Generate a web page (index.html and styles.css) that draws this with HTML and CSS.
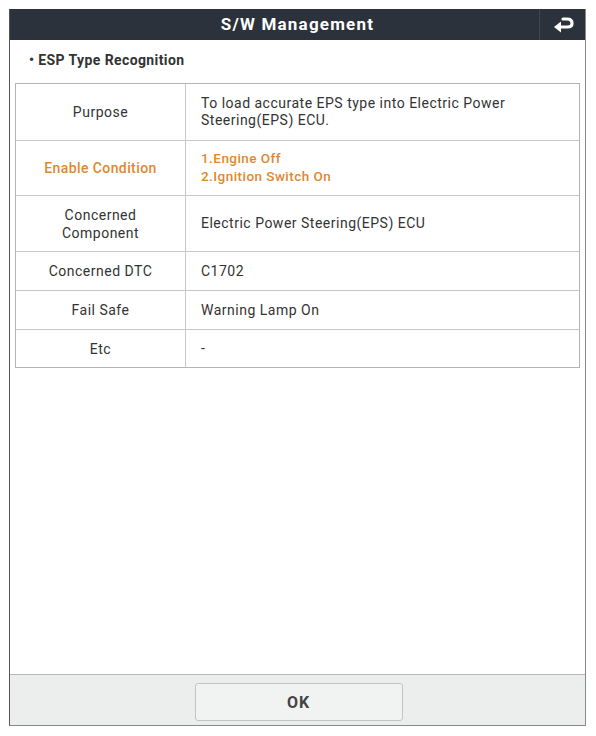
FILE: index.html
```html
<!DOCTYPE html>
<html>
<head>
<meta charset="utf-8">
<link rel="stylesheet" href="styles.css">
</head>
<body>
<div class="frame">
  <div class="header">
    <div class="title">S/W Management</div>
    <div class="back">
      <svg width="22" height="16" viewBox="0 0 22 16">
        <path d="M11 2 H15 C18.5 2 20 4 20 6.2 C20 8.6 18.3 10 15.5 10 H8" fill="none" stroke="#ffffff" stroke-width="3.2" stroke-linecap="round"/>
        <path d="M2 10 L9 4.5 L9 15.5 Z" fill="#ffffff"/>
      </svg>
    </div>
  </div>
  <div class="content">
    <div class="subtitle">• ESP Type Recognition</div>
    <div class="table">
      <div class="row r1">
        <div class="label">Purpose</div>
        <div class="value">To load accurate EPS type into Electric Power Steering(EPS) ECU.</div>
      </div>
      <div class="row r2 warn">
        <div class="label">Enable Condition</div>
        <div class="value">1.Engine Off<br>2.Ignition Switch On</div>
      </div>
      <div class="row r3">
        <div class="label">Concerned<br>Component</div>
        <div class="value">Electric Power Steering(EPS) ECU</div>
      </div>
      <div class="row r4">
        <div class="label">Concerned DTC</div>
        <div class="value">C1702</div>
      </div>
      <div class="row r5">
        <div class="label">Fail Safe</div>
        <div class="value">Warning Lamp On</div>
      </div>
      <div class="row r6">
        <div class="label">Etc</div>
        <div class="value">-</div>
      </div>
    </div>
  </div>
  <div class="footer">
    <button class="ok">OK</button>
  </div>
</div>
</body>
</html>
```

FILE: styles.css
```css
html, body {
  margin: 0;
  padding: 0;
  background: #ffffff;
}
body {
  font-family: Roboto, "Liberation Sans", Arial, sans-serif;
  color: #333;
}
.frame {
  margin: 9px 0 0 9px;
  width: 575px;
  height: 716px;
  border-left: 1px solid #555;
  border-right: 1px solid #888;
  border-bottom: 1px solid #888;
  display: flex;
  flex-direction: column;
  box-sizing: content-box;
}
.header {
  height: 31px;
  background: #2c323b;
  display: flex;
  align-items: stretch;
  flex-shrink: 0;
}
.title {
  flex: 1;
  color: #fff;
  font-weight: bold;
  font-size: 17px;
  letter-spacing: 1.2px;
  display: flex;
  align-items: center;
  justify-content: center;
  padding-left: 46px;
  padding-bottom: 2px;
}
.back {
  width: 45px;
  border-left: 1px solid #414851;
  display: flex;
  align-items: center;
  justify-content: center;
}
.content {
  flex: 1;
  padding: 0 5px;
}
.subtitle {
  font-size: 14px;
  letter-spacing: 0.4px;
  font-weight: bold;
  color: #333;
  padding: 12px 0 0 14px;
  height: 30px;
  box-sizing: border-box;
}
.table {
  border: 1px solid #b4b4b4;
  margin-top: 13px;
}
.row {
  display: flex;
  border-top: 1px solid #c8c8c8;
}
.row:first-child {
  border-top: none;
}
.label {
  width: 169px;
  border-right: 1px solid #c8c8c8;
  display: flex;
  align-items: center;
  justify-content: center;
  text-align: center;
  font-size: 14px;
  letter-spacing: 0.5px;
  line-height: 18px;
  color: #333;
}
.value {
  flex: 1;
  display: flex;
  flex-direction: column;
  justify-content: center;
  padding: 0 15px;
  font-size: 14px;
  letter-spacing: 0.5px;
  line-height: 17px;
  color: #333;
}
.r1 { height: 56px; }
.r2 { height: 54px; }
.r3 { height: 55px; }
.r4 { height: 38px; }
.r5 { height: 38px; }
.r6 { height: 37px; }
.warn .label, .warn .value {
  color: #df8830;
}
.warn .label { font-weight: 500; letter-spacing: 0.4px; }
.warn .value {
  display: block;
  padding-top: 8px;
  font-weight: 500;
  font-size: 13.5px;
  letter-spacing: 0.45px;
  line-height: 18px;
}
.footer {
  height: 51px;
  border-top: 1px solid #b8b8b8;
  background: #eceeee;
  display: flex;
  justify-content: center;
  align-items: flex-start;
  padding-top: 8px;
  box-sizing: border-box;
  flex-shrink: 0;
}
.ok {
  width: 208px;
  height: 38px;
  border: 1px solid #c2c4c4;
  border-radius: 3px;
  background: #f1f2f2;
  font-family: Roboto, "Liberation Sans", Arial, sans-serif;
  font-weight: bold;
  font-size: 16px;
  letter-spacing: 1px;
  color: #444;
  margin-left: 2px;
  padding-top: 2px;
}
```
